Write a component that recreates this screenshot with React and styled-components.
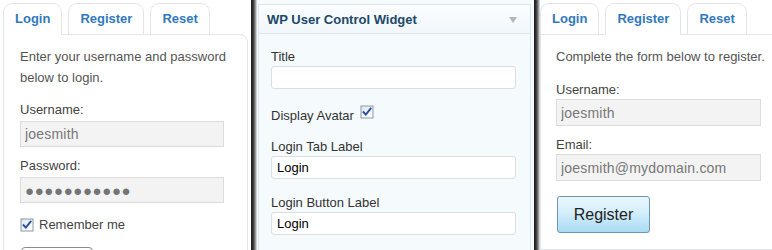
import React from "react";
import styled, { createGlobalStyle } from "styled-components";

const Global = createGlobalStyle`
  html, body {
    margin: 0;
    padding: 0;
    height: 250px;
    overflow: hidden;
    background: #ffffff;
  }
  body {
    font-family: "Liberation Sans", Arial, sans-serif;
    font-size: 13px;
    color: #444;
  }
`;

const Checkbox = ({ size = 14 }) => (
  <CheckBox width={size} height={size} viewBox="0 0 14 14">
    <defs>
      <linearGradient id="cbg" x1="0" y1="0" x2="1" y2="1">
        <stop offset="0" stopColor="#dfe6f1" />
        <stop offset="1" stopColor="#ffffff" />
      </linearGradient>
    </defs>
    <rect x="0.5" y="0.5" width="13" height="13" fill="#8d98a8" />
    <rect x="1.5" y="1.5" width="11" height="11" fill="url(#cbg)" />
    <path
      d="M3.6 7.2 L5.8 9.6 L10.6 3.6"
      fill="none"
      stroke="#2b4d9a"
      strokeWidth="1.9"
      strokeLinecap="square"
    />
  </CheckBox>
);

const TabPanel = ({ active, children, width, flush }) => (
  <Panel $width={width} $flush={flush}>
    <TabRow>
      {["Login", "Register", "Reset"].map((t) => (
        <Tab key={t} $active={t === active}>
          {t}
        </Tab>
      ))}
    </TabRow>
    <Card $flush={flush}>{children}</Card>
  </Panel>
);

export default function App() {
  return (
    <>
      <Global />
      <Strip>
        <TabPanel active="Login" width={251}>
          <Intro>Enter your username and password below to login.</Intro>
          <Label $top={12}>Username:</Label>
          <GrayInput $w={204} $h={26} readOnly value="joesmith" />
          <Label $top={9}>Password:</Label>
          <GrayInput
            $w={204}
            $h={26}
            $dots
            readOnly
            value={"\u25CF".repeat(11)}
          />
          <CheckRow>
            <Checkbox />
            <span>Remember me</span>
          </CheckRow>
          <PlainButton aria-label="Login" />
        </TabPanel>

        <Divider />

        <AdminPanel>
          <Widget>
            <WidgetHeader>
              <span>WP User Control Widget</span>
              <Arrow />
            </WidgetHeader>
            <WidgetBody>
              <WLabel>Title</WLabel>
              <WhiteInput readOnly value="" />
              <AvatarRow>
                <span>Display Avatar</span>
                <Checkbox />
              </AvatarRow>
              <WLabel>Login Tab Label</WLabel>
              <WhiteInput readOnly value="Login" />
              <WLabel $top={15}>Login Button Label</WLabel>
              <WhiteInput readOnly value="Login" />
            </WidgetBody>
          </Widget>
        </AdminPanel>

        <Divider />

        <TabPanel active="Register" flush>
          <Intro>Complete the form below to register.</Intro>
          <RLabel $top={14}>Username:</RLabel>
          <GrayInput $w={205} $h={27} readOnly value="joesmith" />
          <RLabel $top={10}>Email:</RLabel>
          <GrayInput
            $w={205}
            $h={27}
            readOnly
            value="joesmith@mydomain.com"
          />
          <BlueButton>Register</BlueButton>
        </TabPanel>
      </Strip>
    </>
  );
}

const Strip = styled.div`
  display: flex;
  height: 250px;
  overflow: hidden;
`;

const Panel = styled.div`
  ${(p) => (p.$width ? `width: ${p.$width}px;` : "flex: 1;")}
  flex-shrink: 0;
  background: #fff;
  padding: 3px 0 0 ${(p) => (p.$flush ? 0 : 3)}px;
  box-sizing: border-box;
  display: flex;
  flex-direction: column;
`;

const TabRow = styled.div`
  display: flex;
  gap: 6px;
  position: relative;
  z-index: 1;
`;

const Tab = styled.div`
  height: 30px;
  line-height: 30px;
  padding: 0 11px;
  border: 1px solid #e2e5ee;
  border-bottom-color: ${(p) => (p.$active ? "#fff" : "#e2e5ee")};
  border-radius: 9px 9px 0 0;
  background: #fff;
  color: #3179bd;
  font-weight: bold;
  font-size: 13px;
`;

const Card = styled.div`
  flex: 1;
  margin-top: -1px;
  margin-right: ${(p) => (p.$flush ? 0 : 3)}px;
  border: 1px solid #e2e5ee;
  border-right-width: ${(p) => (p.$flush ? 0 : 1)}px;
  border-top-right-radius: ${(p) => (p.$flush ? 0 : 8)}px;
  padding: 11px 0 0 ${(p) => (p.$flush ? 15 : 16)}px;
`;

const Intro = styled.p`
  margin: 0;
  color: #555;
  line-height: 21px;
`;

const Label = styled.div`
  line-height: 20px;
  margin-top: ${(p) => p.$top}px;
  margin-bottom: 1px;
  color: #444;
`;

const RLabel = styled.div`
  line-height: 18px;
  margin-top: ${(p) => p.$top}px;
  color: #444;
`;

const GrayInput = styled.input`
  display: block;
  box-sizing: border-box;
  width: ${(p) => p.$w}px;
  height: ${(p) => p.$h}px;
  margin: 0;
  padding: 0 4px;
  border: 1px solid #dcdcdc;
  background: #f3f3f3;
  color: ${(p) => (p.$dots ? "#747474" : "#777")};
  font-family: "Liberation Sans", Arial, sans-serif;
  font-size: ${(p) => (p.$dots ? "15px" : "14px")};
  letter-spacing: ${(p) => (p.$dots ? "0.6px" : "0.2px")};
  outline: none;
`;

const CheckRow = styled.div`
  display: flex;
  align-items: center;
  gap: 5px;
  margin-top: 14px;
  color: #444;
  line-height: 16px;
`;

const CheckBox = styled.svg`
  flex-shrink: 0;
  display: block;
`;

const PlainButton = styled.button`
  margin-top: 14px;
  margin-left: 1px;
  width: 72px;
  height: 30px;
  border: 1px solid #8a8a8a;
  border-radius: 4px;
  background: linear-gradient(#ffffff, #e9e9e9);
`;

const Divider = styled.div`
  width: 6px;
  flex-shrink: 0;
  background: linear-gradient(
    to right,
    #1c1c1c 0%,
    #2e2e2e 30%,
    #5e5e5e 55%,
    #a9a9a9 80%,
    #e6ecf0 100%
  );
`;

const AdminPanel = styled.div`
  width: 277px;
  flex-shrink: 0;
  background: #f5fafd;
  padding: 4px 3px 0 1px;
  box-sizing: border-box;
`;

const Widget = styled.div`
  border: 1px solid #dde6ed;
  border-bottom: none;
  height: 100%;
  box-sizing: border-box;
  background: #f5fafd;
`;

const WidgetHeader = styled.div`
  height: 28px;
  border-bottom: 1px solid #dde6ed;
  background: linear-gradient(#fbfdfe, #f1f7fb);
  display: flex;
  align-items: center;
  justify-content: space-between;
  padding: 0 13px 0 8px;
  font-weight: bold;
  font-size: 13px;
  color: #22476a;
`;

const Arrow = styled.span`
  width: 0;
  height: 0;
  border-left: 4px solid transparent;
  border-right: 4px solid transparent;
  border-top: 6px solid #b2b7bc;
  margin-top: 2px;
`;

const WidgetBody = styled.div`
  padding: 14px 14px 0 12px;
`;

const WLabel = styled.div`
  line-height: 18px;
  color: #333;
  margin-top: ${(p) => p.$top ?? 0}px;
`;

const WhiteInput = styled.input`
  display: block;
  box-sizing: border-box;
  width: 245px;
  height: 23px;
  padding: 0 5px;
  border: 1px solid #dcdfe2;
  border-radius: 3px;
  background: #fff;
  color: #000;
  font-family: "Liberation Sans", Arial, sans-serif;
  font-size: 13px;
  outline: none;
`;

const AvatarRow = styled.div`
  display: flex;
  align-items: flex-end;
  gap: 6px;
  margin: 16px 0 13px;
  color: #333;
  line-height: 18px;
  svg {
    margin-bottom: 6px;
  }
`;

const BlueButton = styled.button`
  margin-top: 15px;
  margin-left: 1px;
  width: 93px;
  height: 37px;
  border: 1px solid #6f95b4;
  border-radius: 3px;
  background: linear-gradient(#ebf7fd 0%, #d3eefb 45%, #a9dbf4 100%);
  font-family: "Liberation Sans", Arial, sans-serif;
  font-size: 16px;
  color: #222;
  padding: 0;
`;
